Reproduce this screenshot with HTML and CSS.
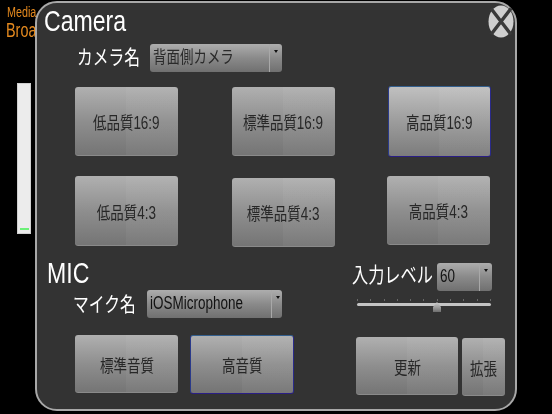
FILE: index.html
```html
<!DOCTYPE html>
<html lang="ja">
<head>
<meta charset="utf-8">
<title>Camera</title>
<link rel="stylesheet" href="styles.css">
</head>
<body>
<div class="screen">
  <div class="backdrop">
    <div class="brand-small"><span class="sq">Media</span></div>
    <div class="brand-large"><span class="sq">Broa</span></div>
    <div class="meter"><div class="meter-level"></div></div>
  </div>
  <div class="dialog">
    <svg class="close" viewBox="0 0 26 33" width="26" height="33" aria-label="close">
      <ellipse cx="13" cy="16.5" rx="12.5" ry="16" fill="#cfcfcf"/>
      <path d="M3 3.5 L23 29.5 M23 3.5 L3 29.5" stroke="#3a3a3a" stroke-width="3.4" fill="none"/>
    </svg>
    <h1 class="title title-camera"><span class="sq">Camera</span></h1>
    <div class="name-row name-camera">
      <span class="label label-camera"><span class="sq">カメラ名</span></span>
      <div class="select select-camera">
        <span class="select-text"><span class="sq">背面側カメラ</span></span>
        <span class="select-arrow"></span>
      </div>
    </div>
    <div class="btn-row row-one">
      <button class="btn b-low"><span class="sq">低品質16:9</span></button>
      <button class="btn b-std"><span class="sq">標準品質16:9</span></button>
      <button class="btn on b-high"><span class="sq">高品質16:9</span></button>
    </div>
    <div class="btn-row row-two">
      <button class="btn b-low2"><span class="sq">低品質4:3</span></button>
      <button class="btn b-std2"><span class="sq">標準品質4:3</span></button>
      <button class="btn b-high2"><span class="sq">高品質4:3</span></button>
    </div>
    <div class="mid">
      <div class="mic-col">
        <h2 class="title title-mic"><span class="sq">MIC</span></h2>
        <div class="name-row name-mic">
          <span class="label label-mic"><span class="sq">マイク名</span></span>
          <div class="select select-mic">
            <span class="select-text"><span class="sq">iOSMicrophone</span></span>
            <span class="select-arrow"></span>
          </div>
        </div>
      </div>
      <div class="level-col">
        <div class="level-row">
          <span class="label label-level"><span class="sq">入力レベル</span></span>
          <div class="select select-level">
            <span class="select-text"><span class="sq">60</span></span>
            <span class="select-arrow"></span>
          </div>
        </div>
        <div class="slider">
          <div class="ticks"><i></i><i></i><i></i><i></i><i></i><i></i><i></i><i></i><i></i><i></i><i></i></div>
          <div class="track"><span class="thumb"></span></div>
        </div>
      </div>
    </div>
    <div class="btn-row row-bottom">
      <button class="btn b-a1"><span class="sq">標準音質</span></button>
      <button class="btn on b-a2"><span class="sq">高音質</span></button>
      <button class="btn b-update"><span class="sq">更新</span></button>
      <button class="btn b-ext"><span class="sq">拡張</span></button>
    </div>
  </div>
</div>
</body>
</html>
```
FILE: styles.css
```css
* { box-sizing: border-box; }
html, body { margin: 0; padding: 0; background: #000; }
.screen {
  position: relative;
  width: 552px;
  height: 414px;
  overflow: hidden;
  background: #000;
  font-family: "Liberation Sans", "Noto Sans CJK JP", sans-serif;
  filter: blur(0.45px);
}
.sq { display: inline-block; transform: scaleX(0.77); transform-origin: left center; white-space: nowrap; }

.backdrop { padding: 4px 0 0 7px; color: #e58a1f; }
.brand-small { height: 15px; font-size: 14px; line-height: 16px; }
.brand-large { height: 22px; margin-left: -1px; font-size: 20px; line-height: 22px; }
.brand-large .sq { transform: scaleX(0.72); }
.meter {
  width: 14px;
  height: 151px;
  margin: 42px 0 0 10px;
  padding-top: 144px;
  background: #ececec;
  border: 1px solid #d0d0d0;
}
.meter-level { width: 9px; height: 2px; margin-left: 2px; background: #6cf078; }

.dialog {
  position: absolute;
  left: 35px;
  top: 1px;
  width: 482px;
  height: 410px;
  border: 2px solid #a8a8a8;
  border-radius: 22px;
  background: #333;
  color: #fff;
}
.close { position: absolute; right: 1px; top: 2px; }

.title { margin: 0; font-weight: 400; }
.title-camera { height: 41px; padding-left: 7px; font-size: 30px; line-height: 36px; }
.title-mic { height: 32px; margin-left: 10px; font-size: 30px; line-height: 29px; }

.label { font-size: 20.5px; line-height: 28px; }
.name-row { display: flex; height: 28px; }
.name-camera { margin-left: 40px; }
.label-camera { width: 73px; }
.name-mic { margin-left: 36px; }
.label-mic { width: 74px; }
.label-mic .sq { transform: translateY(1px) scaleX(0.77); }
.label-level { width: 85px; font-size: 21px; line-height: 24px; }

.select {
  display: flex;
  height: 28px;
  border-radius: 3px;
  background: linear-gradient(#adadad, #8a8a8a 50%, #707070);
}
.select-camera { width: 132px; }
.select-mic { width: 135px; }
.select-level { width: 55px; }
.select-text { flex: 1; padding-left: 3px; font-size: 17.5px; line-height: 27px; color: #2a2a2a; }
.select-mic .select-text, .select-level .select-text { color: #111; }
.select-arrow {
  position: relative;
  width: 13px;
  border-left: 1px solid #a8a8a8;
}
.select-arrow::after {
  content: "";
  position: absolute;
  left: 4px;
  top: 6px;
  border: 2.5px solid transparent;
  border-top: 3px solid #111;
  border-bottom: 0;
}

.btn-row { display: flex; align-items: flex-start; }
.row-one { margin: 14px 0 0 38px; }
.row-two { margin: 19px 0 0 38px; }
.row-bottom { margin: 17px 0 0 38px; }

.btn {
  display: flex;
  align-items: center;
  justify-content: center;
  padding: 0;
  width: 103px;
  height: 69px;
  border: 0;
  border-radius: 3px;
  font-family: inherit;
  font-size: 17.5px;
  color: #272727;
  box-shadow: inset 0 -1px 0 #8a8a8a;
  background:
    linear-gradient(90deg, rgba(255,255,255,0) 50%, rgba(255,255,255,0.04) 50%),
    linear-gradient(#b0b0b0, #8e8e8e 50%, #747474);
}
.btn .sq { transform-origin: center center; }
.btn.on {
  border: 1px solid;
  border-color: #34608f #2a2a8a #2a1e86 #2a3a8a;
  box-shadow: none;
  background:
    linear-gradient(90deg, rgba(255,255,255,0) 50%, rgba(255,255,255,0.04) 50%),
    linear-gradient(#c0c0c0, #9c9c9c 50%, #7c7c7c);
}
.b-low { margin-top: 1px; }
.b-std { margin: 1px 0 0 54px; }
.b-high { margin-left: 53px; height: 71px; }
.b-low2 { height: 70px; }
.b-std2 { margin: 2px 0 0 54px; }
.b-high2 { margin-left: 52px; }
.b-a1 { height: 58px; }
.btn.b-a2 {
  width: 104px;
  height: 59px;
  margin-left: 12px;
  background:
    linear-gradient(90deg, rgba(255,255,255,0) 50%, rgba(255,255,255,0.04) 50%),
    linear-gradient(#b0b0b0, #8e8e8e 50%, #747474);
}
.b-update { width: 102px; height: 58px; margin: 2px 0 0 62px; }
.b-ext { width: 43px; height: 58px; margin: 3px 0 0 4px; }

.mid { display: flex; margin-top: 11px; }
.mic-col { width: 245px; }
.level-col { width: 140px; margin: 5px 0 0 70px; }
.level-row { display: flex; }
.slider { width: 134px; margin: 8px 0 0 5px; }
.ticks { display: flex; justify-content: space-between; height: 3px; }
.ticks i { display: block; width: 1px; height: 2px; background: #6a6a6a; }
.track { position: relative; height: 3px; margin-top: 1px; border-radius: 2px; background: #c4c4c4; }
.thumb {
  position: absolute;
  left: 76px;
  top: -1px;
  width: 8px;
  height: 10px;
  clip-path: polygon(50% 0, 100% 50%, 100% 100%, 0 100%, 0 50%);
  background: linear-gradient(#d0d0d0, #6e6e6e);
}
```
